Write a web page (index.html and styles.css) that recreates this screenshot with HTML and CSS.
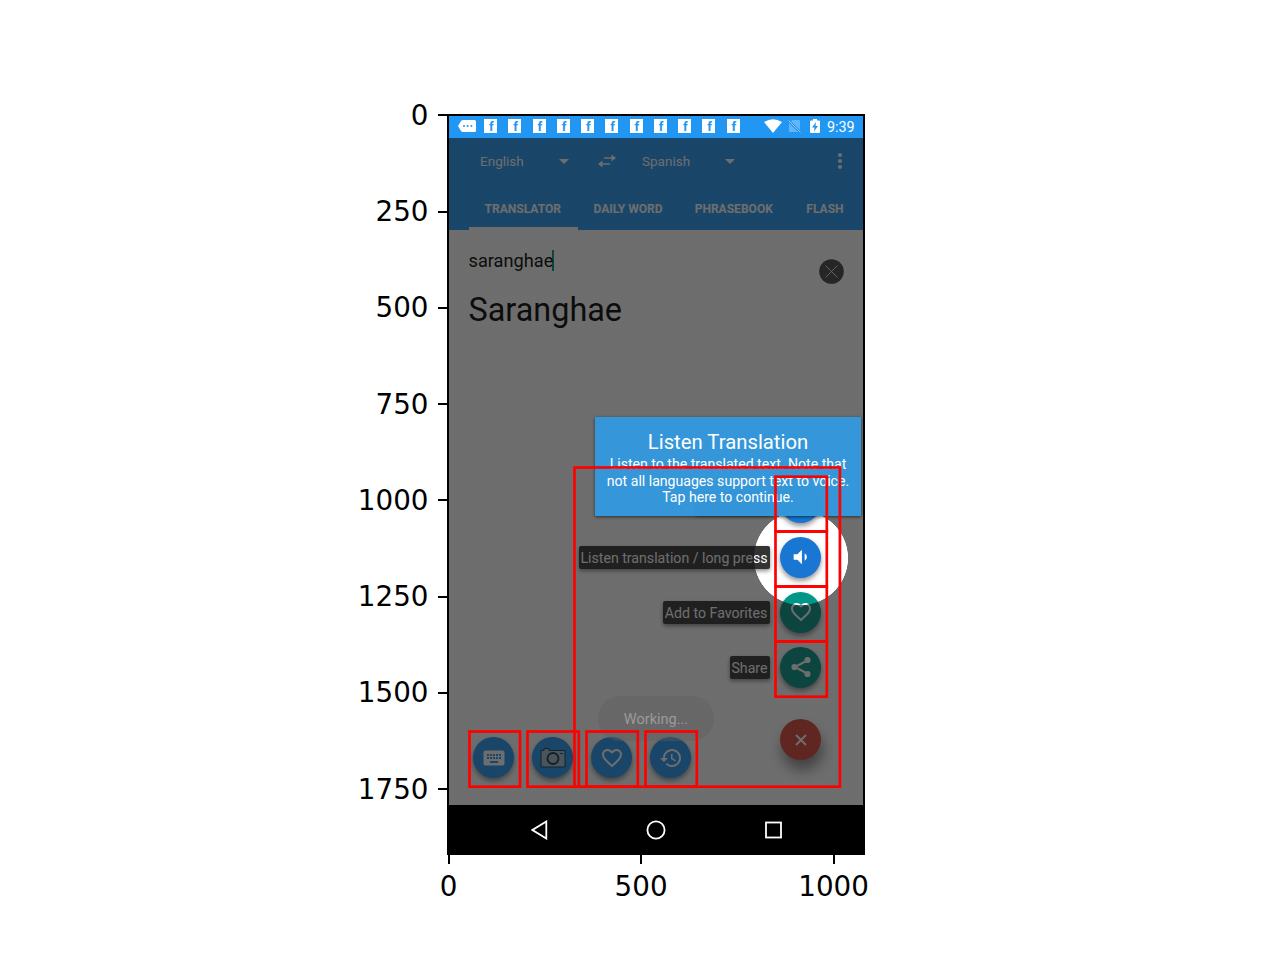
FILE: index.html
```
<!DOCTYPE html>
<html lang="en">
<head>
<meta charset="utf-8">
<title>Translator</title>
<link rel="stylesheet" href="styles.css">
</head>
<body>
<svg class="defs" width="0" height="0">
  <symbol id="heart" viewBox="0 0 24 24"><path d="M16.5 3c-1.74 0-3.41.81-4.5 2.09C10.91 3.81 9.24 3 7.5 3 4.42 3 2 5.42 2 8.5c0 3.78 3.4 6.86 8.55 11.54L12 21.35l1.45-1.32C18.6 15.36 22 12.28 22 8.5 22 5.42 19.58 3 16.5 3zm-4.4 15.55l-.1.1-.1-.1C7.14 14.24 4 11.39 4 8.5 4 6.5 5.5 5 7.5 5c1.54 0 3.04.99 3.57 2.36h1.87C13.46 5.99 14.96 5 16.5 5c2 0 3.5 1.5 3.5 3.5 0 2.89-3.14 5.74-7.9 10.05z"/></symbol>
</svg>
<main class="figure">
  <div class="y-axis">
    <span>0</span><span>250</span><span>500</span><span>750</span><span>1000</span><span>1250</span><span>1500</span><span>1750</span>
  </div>
  <div class="plot">
    <div class="phone">
      <div class="status">
        <svg class="more" width="18" height="12" viewBox="0 0 18 12"><path d="M5 0H16.500Q18 0 18 1.500V10.500Q18 12 16.500 12H5Q3.800 12 3 11L0 6 3 1Q3.800 0 5 0Z" fill="#fff"/><g fill="#2196f3"><circle cx="6" cy="6" r="1"/><circle cx="9.700" cy="6" r="1"/><circle cx="13.400" cy="6" r="1"/></g></svg>
        <div class="fbs"><b>f</b><b>f</b><b>f</b><b>f</b><b>f</b><b>f</b><b>f</b><b>f</b><b>f</b><b>f</b><b>f</b></div>
        <svg class="wifi" width="18" height="14" viewBox="0 0 18 14"><path d="M0 3Q9-2.500 18 3L9 14Z" fill="#fff"/></svg>
        <svg class="sim" width="13" height="14" viewBox="0 0 13 14"><path d="M4.500 1H11Q12 1 12 2V11L3 2.500ZM1 4L10 13H2Q1 13 1 12Z" fill="#64b5f7"/><path d="M.5 1.500L12.500 13.500" stroke="#8ac8f9"/></svg>
        <svg class="battery" width="10" height="14" viewBox="0 0 10 14"><path d="M3 0H7V1.500H9Q10 1.500 10 2.500V13Q10 14 9 14H1Q0 14 0 13V2.500Q0 1.500 1 1.500H3Z" fill="#fff"/><path d="M6 3L2 8.500H4.500L4 12.500 8 7H5.500Z" fill="#2196f3"/></svg>
        <time>9:39</time>
      </div>
      <header class="appbar">
        <div class="langs">
          <span class="lang first">English</span><i class="caret"></i>
          <svg class="swap" width="18" height="14" viewBox="0 0 18 14"><path d="M6 4H14M4 10H12" stroke="#fff" stroke-width="1.600"/><path d="M13.500 .5L18 4 13.500 7.500ZM4.500 6.500L0 10 4.500 13.500Z" fill="#fff"/></svg>
          <span class="lang second">Spanish</span><i class="caret"></i>
          <svg class="dots" width="6" height="18" viewBox="0 0 6 18" fill="#fff"><circle cx="3" cy="3" r="2.100"/><circle cx="3" cy="9" r="2.100"/><circle cx="3" cy="15" r="2.100"/></svg>
        </div>
        <nav class="tabs"><span class="on">TRANSLATOR</span><span>DAILY WORD</span><span>PHRASEBOOK</span><span>FLASH</span></nav>
      </header>
      <section class="content">
        <div class="texts">
          <p class="source">saranghae</p>
          <p class="result">Saranghae</p>
        </div>
        <svg class="clear" width="25" height="25" viewBox="0 0 25 25"><circle cx="12.500" cy="12.500" r="12.300" fill="#434343"/><path d="M6.500 6.500L18.500 18.500M18.500 6.500L6.500 18.500" stroke="#e4e4e4"/></svg>
      </section>
      <footer class="navbar">
        <svg width="17" height="20" viewBox="0 0 17 20"><path d="M15.300 1.500V18.500L1.500 10Z"/></svg>
        <svg width="20" height="20" viewBox="0 0 20 20"><circle cx="10" cy="10" r="8.600"/></svg>
        <svg width="17" height="20" viewBox="0 0 17 20"><rect x="1" y="2.500" width="15" height="15"/></svg>
      </footer>

      <div class="quick">
        <div class="fab blue"><svg width="24" height="24" viewBox="0 0 24 24"><rect x="1.500" y="4.500" width="21" height="15" rx="2" fill="#fff"/><path d="M5 9H19M5 12H19" stroke="#2196f3" stroke-width="2" stroke-dasharray="2 1"/><path d="M8 16H16" stroke="#2196f3" stroke-width="2"/></svg></div>
        <div class="fab blue"><svg width="26" height="22" viewBox="0 0 26 22"><path d="M1 3.500H4V1.500H9V3.500H25V20H1Z" fill="#a0bfd4" stroke="#183a52"/><circle cx="13" cy="11.500" r="5.500" fill="#a8bccb" stroke="#123149" stroke-width="1.800"/><path d="M20 6.500H23" stroke="#183a52"/></svg></div>
        <div class="fab blue"><svg width="24" height="24"><use href="#heart"/></svg></div>
        <div class="fab blue"><svg width="22" height="22" viewBox="1 1 22 22"><path d="M13 3c-4.970 0-9 4.030-9 9H1l3.890 3.890.07.14L9 12H6c0-3.870 3.130-7 7-7s7 3.130 7 7-3.130 7-7 7c-1.930 0-3.680-.79-4.940-2.060l-1.420 1.420C8.270 19.990 10.510 21 13 21c4.970 0 9-4.030 9-9s-4.030-9-9-9zm-1 5v5l4.280 2.540.72-1.210-3.500-2.080V8H12z"/></svg></div>
      </div>
      <div class="menu">
        <div class="item"><span class="label blank"></span><div class="fab royal"></div></div>
        <div class="item"><span class="label l1">Listen translation / long press</span><div class="fab royal"><svg width="22" height="22" viewBox="0 0 24 24"><path d="M4 9v6h4l5 5V4L8 9H4zM16 8v8a4.500 4.500 0 0 0 0-8z"/></svg></div></div>
        <div class="item"><span class="label l2">Add to Favorites</span><div class="fab teal"><svg width="24" height="24"><use href="#heart"/></svg></div></div>
        <div class="item"><span class="label l3">Share</span><div class="fab teal"><svg width="22" height="22" viewBox="1 1 22 22"><path d="M19 5L6 12 19 19" fill="none" stroke="#fff" stroke-width="2"/><circle cx="18.500" cy="5" r="3.100"/><circle cx="5.500" cy="12" r="3.100"/><circle cx="18.500" cy="19" r="3.100"/></svg></div></div>
        <div class="fab red"><svg width="12" height="12" viewBox="0 0 12 12"><path d="M1 1L11 11M11 1L1 11" stroke="#fff" stroke-width="1.900"/></svg></div>
      </div>
      <div class="scrim"></div>
      <div class="toast">Working...</div>
      <div class="tip"><h2>Listen Translation</h2><p>Listen to the translated text. Note that<br>not all languages support text to voice.<br>Tap here to continue.</p></div>
    </div>
    <svg class="boxes" width="418" height="741" viewBox="447 114 418 741">
      <rect x="574.500" y="467.500" width="265.400" height="319.200"/>
      <rect x="775.500" y="476.700" width="51.300" height="54.800"/>
      <rect x="775.500" y="531.500" width="51.300" height="55"/>
      <rect x="775.500" y="586.500" width="51.300" height="55"/>
      <rect x="775.500" y="641.500" width="51.300" height="55.200"/>
      <rect x="469.500" y="731.500" width="50.500" height="55.200"/>
      <rect x="527.500" y="731.500" width="51.300" height="55.200"/>
      <rect x="586.500" y="731.500" width="51.300" height="55.200"/>
      <rect x="645.500" y="731.500" width="51.300" height="55.200"/>
    </svg>
  </div>
  <div class="x-axis"><span>0</span><span>500</span><span>1000</span></div>
</main>
</body>
</html>
```
FILE: styles.css
```
* { box-sizing: border-box; }
body { margin: 0; background: #fff; font-family: Roboto, sans-serif; }
.defs { display: block; position: absolute; }
.figure {
  width: 1280px; height: 960px; padding: 114px 0 0 340px;
  display: grid; grid-template-columns: 107px 418px; grid-template-rows: 741px 60px;
}
.y-axis, .x-axis { font: 27.78px/32px "DejaVu Sans", sans-serif; color: #000; }
.y-axis { margin-top: -47.2px; }
.y-axis span { display: flex; height: 96.3px; align-items: center; justify-content: flex-end; padding-top: 1.5px; }
.y-axis span::after { content: ""; width: 9px; height: 2px; background: #000; margin: -1px 0 0 9.5px; }
.x-axis { grid-column: 2; display: flex; margin-left: -94.7px; width: 580px; }
.x-axis span { flex: 0 0 192.5px; display: flex; flex-direction: column; align-items: center; }
.x-axis span::before { content: ""; width: 2px; height: 9px; background: #000; margin-bottom: 7px; }
.plot { position: relative; border: 2px solid #000; }
.phone { position: relative; width: 414px; height: 737px; overflow: hidden; display: flex; flex-direction: column; background: #fff; }

.status { height: 22px; background: #2196f3; display: flex; align-items: center; padding: 0 8px 2px 9px; color: #fff; }
.status svg { flex: none; }
.fbs { display: flex; gap: 11.25px; margin-left: 8px; }
.fbs b { width: 13px; height: 14px; background: #fff; color: #2196f3; font: bold 13px/15px Roboto, sans-serif; padding-left: 5px; }
.wifi { margin-left: 24.500px; }
.sim { margin-left: 6px; }
.battery { margin-left: 9px; }
.status time { margin: 1px 0 0 7px; font-size: 14.3px; }

.appbar { height: 92px; background: #2196f3; color: #fff; }
.langs { height: 46px; display: flex; align-items: center; padding: 0 20px 0 31px; font-size: 13.5px; }
.lang.first { width: 79px; }
.lang.second { width: 83px; }
.caret { border: 5px solid transparent; border-top-color: #fff; border-bottom: 0; margin-top: 1px; }
.swap { margin: 0 26px 0 29px; }
.dots { margin-left: auto; }
.tabs { height: 46px; display: flex; padding-left: 19.5px; font-size: 12.05px; font-weight: 700; line-height: 50px; overflow: hidden; white-space: nowrap; }
.tabs span { padding: 0 16px; }
.tabs span:last-child { margin-left: 1.5px; }
.tabs .on { border-bottom: 3px solid #fff; width: 109px; }

.content { flex: 1; display: flex; justify-content: space-between; padding: 20px 19px 0 19.5px; background: #fff; }
.texts p { margin: 0; color: #000; }
.source { font-size: 18.2px; line-height: 21px; border-right: 2px solid #009688; width: 85px; }
.texts .result { font-size: 32.4px; line-height: 40px; margin-top: 19px; }
.clear { margin-top: 9px; }

.navbar { height: 48px; padding-top: 1px; background: #000; display: flex; align-items: center; justify-content: center; gap: 98.5px; position: relative; z-index: 2; }
.navbar svg { fill: none; stroke: #fff; stroke-width: 1.8; }

.fab { flex: none; width: 41px; height: 41px; border-radius: 50%; display: flex; align-items: center; justify-content: center; fill: #fff; box-shadow: 0 3px 5px rgba(0,0,0,.42); }
.blue { background: #2196f3; }
.royal { background: #1976d2; }
.teal { background: #009688; }
.red { background: #db4437; margin-top: 17.5px; box-shadow: 2px 10px 14px rgba(0,0,0,.45); }
.quick { position: absolute; left: 24px; top: 621.3px; display: flex; gap: 18px; }
.menu { position: absolute; right: 42px; top: 366px; display: flex; flex-direction: column; align-items: flex-end; gap: 13.9px; }
.item { display: flex; align-items: center; gap: 10.5px; }
.label { height: 23px; border-radius: 2px; background: #333; color: #fff; font-size: 14.15px; line-height: 24px; text-align: center; white-space: nowrap; box-shadow: 0 2px 4px rgba(0,0,0,.45); }
.label.blank { width: 75px; }
.l1 { width: 191px; }
.l2 { width: 107px; }
.l3 { width: 40px; }

/* Darkened layer with a round spotlight over the listen button */
.scrim { position: absolute; inset: 22px 0 48px; background: radial-gradient(circle at 352px 420px, transparent 46.7px, rgba(20,20,20,.62) 47.3px); }
.toast { position: absolute; left: 149px; top: 580px; width: 116px; height: 45px; border-radius: 22px; background: rgba(95,95,95,.4); color: #9b9b9b; font-size: 14.5px; line-height: 47px; text-align: center; }
.tip { position: absolute; left: 146px; top: 301px; width: 266px; height: 99px; padding-top: 12px; background: rgba(52,152,219,.98); color: #fff; text-align: center; box-shadow: 0 1px 3px rgba(0,0,0,.6); }
.tip h2 { margin: 0; font-size: 20.3px; font-weight: 400; line-height: 26px; }
.tip p { margin: 1px 0 0; font-size: 14.1px; line-height: 16.6px; white-space: nowrap; }
.boxes { position: absolute; left: -2px; top: -2px; fill: none; stroke: #f00; stroke-width: 2.7; }
```
